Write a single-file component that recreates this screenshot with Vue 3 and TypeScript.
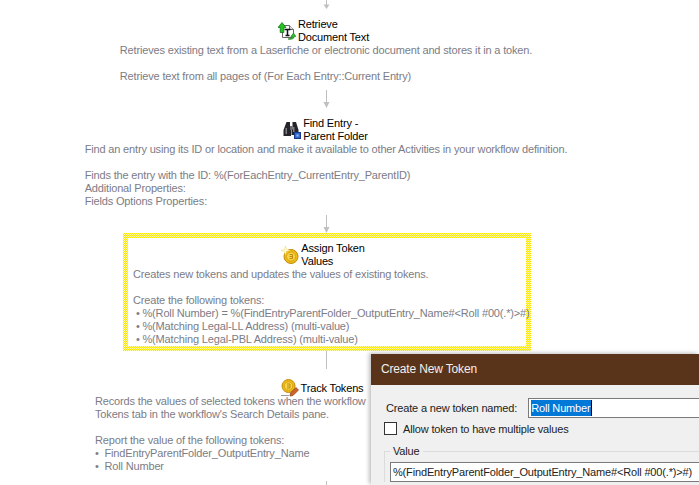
<script setup lang="ts">
</script>

<template>
  <div class="page">
    <div class="flow">
      <svg class="arrow a-top" width="9" height="9" viewBox="0 0 9 9"><path d="M4.500 0V6" stroke="#c0c0c0"/><path d="M1.500 4.500H7.500L4.500 9Z" fill="#c0c0c0"/></svg>

      <section class="activity first">
        <div class="head">
          <svg class="icon" width="18" height="18" viewBox="0 0 18 18">
            <path d="M4.500 3.500H11.500L15.500 7.500V15.500H4.500Z" fill="#fff" stroke="#666"/>
            <path d="M11.500 3.500V7.500H15.500" fill="#e4e4e4" stroke="#666"/>
            <path d="M6.500 7.500H12.500M9.500 7.500V13.500M7.500 13.500H11.500" fill="none" stroke="#111" stroke-width="1.500"/>
            <path d="M4 .5L8 5.500H5.800V10.500H2.200V5.500H0Z" fill="#22c422" stroke="#0a6a0a" stroke-width=".7"/>
            <path d="M10.500 16.500Q14 17 14.500 14.500H12.800L15.500 11L18 14.500H16.500Q16 17.500 10.500 17.500Z" fill="#2fc02f" stroke="#0a6a0a" stroke-width=".5"/>
          </svg>
          <div class="title">Retrieve<br>Document Text</div>
        </div>
        <div class="desc">Retrieves existing text from a Laserfiche or electronic document and stores it in a token.<br><br>Retrieve text from all pages of (For Each Entry::Current Entry)</div>
      </section>

      <svg class="arrow a-mid" width="9" height="18" viewBox="0 0 9 18"><path d="M4.500 0V14" stroke="#c0c0c0"/><path d="M1.500 12H7.500L4.500 18Z" fill="#c0c0c0"/></svg>

      <section class="activity second">
        <div class="head">
          <svg class="icon" width="18" height="18" viewBox="0 0 18 18">
            <path d="M3.500 1H7V8H8V15H.5V9Z" fill="#24242a"/>
            <path d="M9.500 1H13L15.500 9V14H8.500V8H9.500Z" fill="#24242a"/>
            <rect x="2.500" y="7" width="1.500" height="6" fill="#808085"/>
            <rect x="10" y="6" width="1.500" height="5" fill="#808085"/>
            <rect x="7" y="5" width="2.500" height="4" fill="#6a6a70"/>
            <rect x="11.500" y="11.500" width="6" height="6" fill="#3067d0" stroke="#173a8a"/>
            <rect x="13.500" y="13.500" width="2" height="2" fill="#9cc0f5"/>
          </svg>
          <div class="title">Find Entry -<br>Parent Folder</div>
        </div>
        <div class="desc">Find an entry using its ID or location and make it available to other Activities in your workflow definition.<br><br>Finds the entry with the ID: %(ForEachEntry_CurrentEntry_ParentID)<br>Additional Properties:<br>Fields Options Properties:</div>
      </section>

      <svg class="arrow a-sel" width="9" height="18" viewBox="0 0 9 18"><path d="M4.500 0V14" stroke="#c0c0c0"/><path d="M1.500 12H7.500L4.500 18Z" fill="#c0c0c0"/></svg>

      <section class="activity selected">
        <div class="head">
          <svg class="icon" width="18" height="18" viewBox="0 0 18 18">
            <circle cx="10" cy="10.500" r="7" fill="#efb916" stroke="#c08d0c"/>
            <circle cx="10" cy="10.500" r="4.500" fill="#f9d648" stroke="#d9a514"/>
            <path d="M8.500 8.500H11.500V12.500H8.500M8.500 10.500H11" fill="none" stroke="#bb8a10"/>
            <path d="M4.500 0L5.500 3.500L9 4.500L5.500 5.500L4.500 9L3.500 5.500L0 4.500L3.500 3.500Z" fill="#fffbd8" stroke="#ecd660" stroke-width=".5"/>
          </svg>
          <div class="title">Assign Token<br>Values</div>
        </div>
        <div class="desc">Creates new tokens and updates the values of existing tokens.<br><br>Create the following tokens:<br>&nbsp;• %(Roll Number) = %(FindEntryParentFolder_OutputEntry_Name#&lt;Roll #00(.*)&gt;#)<br>&nbsp;• %(Matching Legal-LL Address) (multi-value)<br>&nbsp;• %(Matching Legal-PBL Address) (multi-value)</div>
      </section>

      <svg class="arrow a-after" width="9" height="18" viewBox="0 0 9 18"><path d="M4.500 0V18" stroke="#c0c0c0"/></svg>

      <section class="activity fourth">
        <div class="head">
          <svg class="icon" width="18" height="18" viewBox="0 0 18 18">
            <circle cx="7.500" cy="7" r="6.500" fill="#efb916" stroke="#c08d0c"/>
            <circle cx="7.500" cy="7" r="4.200" fill="#f9d648" stroke="#d9a514"/>
            <path d="M6 5H9V9H6M6 7H8.500" fill="none" stroke="#bb8a10"/>
            <path d="M9.500 14L15 8.500L17.500 11L12 16.500L9 17Z" fill="#d0632a" stroke="#8a3a14" stroke-width=".7"/>
            <path d="M0 16.500H8" stroke="#9a9a9a"/>
          </svg>
          <div class="title">Track Tokens</div>
        </div>
        <div class="desc">Records the values of selected tokens when the workflow<br>Tokens tab in the workflow's Search Details pane.<br><br>Report the value of the following tokens:<br>•&nbsp; FindEntryParentFolder_OutputEntry_Name<br>•&nbsp; Roll Number</div>
      </section>

      <svg class="arrow a-end" width="9" height="8" viewBox="0 0 9 8"><path d="M4.500 0V8" stroke="#c0c0c0"/></svg>
    </div>

    <div class="dialog">
      <div class="titlebar">Create New Token</div>
      <div class="dialog-body">
        <div class="name-row">
          <label class="name-label">Create a new token named:</label>
          <div class="name-input"><span class="selection">Roll Number</span><i class="caret"></i></div>
        </div>
        <div class="check-row">
          <span class="checkbox"></span>
          <span>Allow token to have multiple values</span>
        </div>
        <fieldset class="value-group">
          <legend>Value</legend>
          <div class="value-input">%(FindEntryParentFolder_OutputEntry_Name#&lt;Roll #00(.*)&gt;#)</div>
        </fieldset>
      </div>
    </div>
  </div>
</template>

<style>
html, body { margin: 0; background: #fff; }
</style>

<style scoped>
.page {
  position: relative;
  width: 699px;
  height: 485px;
  overflow: hidden;
  background: #fff;
  font-family: "Liberation Sans", Arial, sans-serif;
  font-size: 11px;
  letter-spacing: -0.16px;
}
.flow {
  display: flex;
  flex-direction: column;
  align-items: center;
  width: 652px;
}
.arrow { display: block; flex: none; }
.a-top { margin-bottom: 9px; }
.a-mid { margin-top: 7px; margin-bottom: 9px; }
.a-sel { margin-top: 7px; margin-bottom: 0; }
.a-after { margin-top: 0; margin-bottom: 12px; }
.a-end { margin-top: 8px; }
.activity {
  display: flex;
  flex-direction: column;
  align-items: center;
  flex: none;
}
.selected {
  box-sizing: border-box;
  width: 408px;
  height: 118px;
  margin-left: 2px;
  padding: 4px 5px 0;
  border: 5px solid transparent;
  background:
    linear-gradient(#fff, #fff) padding-box,
    repeating-conic-gradient(#ffe600 0 25%, #fff8a8 0 50%) 0 0 / 2px 2px border-box;
}
.head {
  display: flex;
  align-items: center;
  gap: 2px;
  height: 26px;
  margin-right: 5px;
}
.second .head { margin-right: 1px; }
.selected .head { margin-right: 8px; }
.fourth .head { height: 14px; margin-right: 8px; }
.fourth .desc { width: 462px; }
.icon { flex: none; display: block; }
.title {
  line-height: 13px;
  color: #000;
  white-space: nowrap;
}
.desc {
  line-height: 13px;
  color: #7c7c86;
  white-space: nowrap;
  align-self: stretch;
}
.dialog {
  position: absolute;
  left: 371px;
  top: 354px;
  right: 0;
  bottom: 0;
  background: #f0f0f0;
  box-shadow: -2px -1px 4px rgba(0,0,0,.25);
  color: #222;
}
.titlebar {
  height: 31px;
  background: #5a341a;
  color: #f2f0ee;
  font-size: 12px;
  line-height: 31px;
  padding-left: 10px;
}
.dialog-body { padding: 13px 0 0 13px; }
.name-row {
  display: flex;
  align-items: center;
  gap: 11px;
  padding-left: 2px;
  height: 20px;
}
.name-label { white-space: nowrap; }
.name-input {
  flex: 1;
  height: 20px;
  box-sizing: border-box;
  background: #fff;
  border: 1px solid #7a7a7a;
  border-right: 0;
  padding: 1px 0 0 2px;
  display: flex;
  align-items: flex-start;
}
.selection {
  background: #0078d7;
  color: #fff;
  line-height: 16px;
}
.caret { width: 1px; height: 16px; background: #000; }
.check-row {
  display: flex;
  align-items: center;
  gap: 6px;
  margin-top: 3px;
  height: 15px;
}
.checkbox {
  width: 11px;
  height: 11px;
  border: 1px solid #333;
  background: #fff;
}
.value-group {
  margin: 8px 0 0;
  padding: 0 0 0 5px;
  border: 1px solid #dcdcdc;
  border-right: 0;
  border-bottom: 0;
}
.value-group legend {
  padding: 0 3px;
  line-height: 14px;
}
.value-input {
  margin-top: 4px;
  height: 20px;
  box-sizing: border-box;
  background: #fff;
  border: 1px solid #7a7a7a;
  border-right: 0;
  line-height: 18px;
  padding-left: 2px;
  white-space: nowrap;
  overflow: hidden;
}
</style>
